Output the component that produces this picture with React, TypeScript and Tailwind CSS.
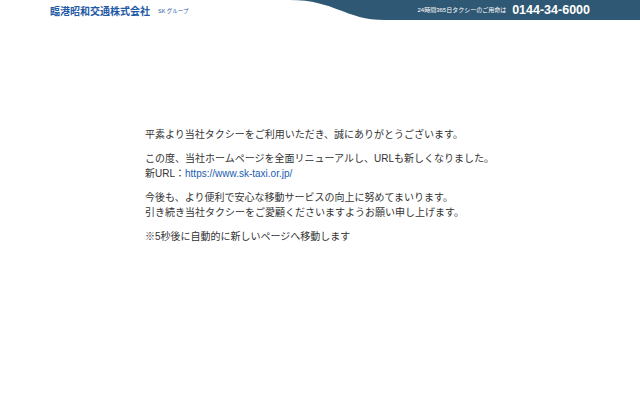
export default function App() {
  const font = { fontFamily: '"Liberation Sans", "Noto Sans CJK JP", sans-serif' }
  return (
    <div className="min-h-[400px] bg-white text-[#333]" style={font}>
      <header className="relative h-[20px]">
        <svg
          className="absolute right-0 top-0"
          width="350"
          height="20"
          viewBox="0 0 350 20"
          preserveAspectRatio="none"
        >
          <path d="M0 0 C45 0 55 20 95 20 L350 20 L350 0 Z" fill="#2f5874" />
        </svg>
        <div className="relative mx-auto flex h-full w-[540px] items-center justify-between">
          <div className="mt-[4px] flex items-center gap-[8px]">
            <span className="text-[10px] font-bold leading-none text-[#1f5aa6]">臨港昭和交通株式会社</span>
            <span className="text-[5.5px] leading-none text-[#1f5aa6]">SK グループ</span>
          </div>
          <div className="flex items-center gap-[6px] text-white">
            <span className="text-[6px] leading-none">24時間365日タクシーのご用命は</span>
            <span className="text-[12.5px] font-bold leading-none">0144-34-6000</span>
          </div>
        </div>
      </header>
      <main className="mx-auto w-[350px] pt-[107px] text-[10px] leading-[15px]">
        <p>平素より当社タクシーをご利用いただき、誠にありがとうございます。</p>
        <p className="mt-[9px]">
          この度、当社ホームページを全面リニューアルし、URLも新しくなりました。
          <br />
          新URL：<a href="#" className="text-[#1a5cb0]">https://www.sk-taxi.or.jp/</a>
        </p>
        <p className="mt-[9px]">
          今後も、より便利で安心な移動サービスの向上に努めてまいります。
          <br />
          引き続き当社タクシーをご愛顧くださいますようお願い申し上げます。
        </p>
        <p className="mt-[9px]">※5秒後に自動的に新しいページへ移動します</p>
      </main>
    </div>
  )
}
